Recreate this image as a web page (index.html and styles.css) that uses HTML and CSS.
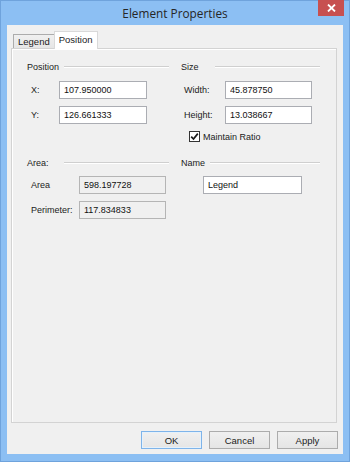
FILE: index.html
```html
<!DOCTYPE html>
<html lang="en">
<head>
    <meta charset="UTF-8">
    <meta name="viewport" content="width=device-width, initial-scale=1.0">
    <title>Element Properties</title>
    <link rel="stylesheet" href="styles.css">
</head>
<body>

    <div class="window">
        <!-- Title bar -->
        <div class="titlebar">
            <span></span>
            <span class="title">Element Properties</span>
            <button class="btn-close" type="button" aria-label="Close">
                <svg width="9" height="8" viewBox="0 0 9 8">
                    <path d="M1 0.5 L8 7.5 M8 0.5 L1 7.5" stroke="#fff" stroke-width="1.8" fill="none"/>
                </svg>
            </button>
        </div>

        <div class="client">
            <!-- Tabs -->
            <div class="tabs">
                <span class="tab">Legend</span>
                <span class="tab tab-active">Position</span>
            </div>

            <div class="panel">
                <div class="section">
                    <!-- Position group -->
                    <div class="group">
                        <div class="group-head head-position"><span>Position</span></div>
                        <div class="row row-pos">
                            <label for="pos-x">X:</label>
                            <input type="text" id="pos-x" value="107.950000">
                        </div>
                        <div class="row row-pos">
                            <label for="pos-y">Y:</label>
                            <input type="text" id="pos-y" value="126.661333">
                        </div>
                    </div>

                    <!-- Size group -->
                    <div class="group">
                        <div class="group-head head-size"><span>Size</span></div>
                        <div class="row row-size">
                            <label for="size-w">Width:</label>
                            <input type="text" id="size-w" value="45.878750">
                        </div>
                        <div class="row row-size">
                            <label for="size-h">Height:</label>
                            <input type="text" id="size-h" value="13.038667">
                        </div>
                        <div class="check-row">
                            <span class="check-box">
                                <svg width="9" height="9" viewBox="0 0 9 9">
                                    <path d="M1.2 4.6 L3.5 7 L7.8 1.6" stroke="#1a1a1a" stroke-width="1.7" fill="none"/>
                                </svg>
                            </span>
                            <span>Maintain Ratio</span>
                        </div>
                    </div>
                </div>

                <div class="section section-lower">
                    <!-- Area group -->
                    <div class="group">
                        <div class="group-head head-area"><span>Area:</span></div>
                        <div class="row row-area">
                            <span class="row-label">Area</span>
                            <span class="readout">598.197728</span>
                        </div>
                        <div class="row row-area">
                            <span class="row-label">Perimeter:</span>
                            <span class="readout">117.834833</span>
                        </div>
                    </div>

                    <!-- Name group -->
                    <div class="group">
                        <div class="group-head head-name"><span>Name</span></div>
                        <div class="row row-name">
                            <input type="text" value="Legend">
                        </div>
                    </div>
                </div>
            </div>

            <!-- Dialog buttons -->
            <div class="buttons">
                <button type="button" class="btn btn-default">OK</button>
                <button type="button" class="btn">Cancel</button>
                <button type="button" class="btn">Apply</button>
            </div>
        </div>
    </div>

</body>
</html>
```

FILE: styles.css
```css
:root {
    --frame: #8cbff3;
    --frame-edge: #6fa3dc;
    --face: #f0f0f0;
    --txt: #1b1b1b;
    --field-border: #abadb3;
    --etch-dark: #cfcfcf;
}

* {
    box-sizing: border-box;
}

body {
    margin: 0;
    font-family: 'Liberation Sans', Arial, sans-serif;
    font-size: 9px;
    color: var(--txt);
}

.window {
    width: 350px;
    height: 462px;
    background-color: var(--frame);
    border: 1px solid var(--frame-edge);
    display: flex;
    flex-direction: column;
}

/* Title bar */
.titlebar {
    height: 24px;
    display: grid;
    grid-template-columns: 1fr auto 1fr;
    align-items: start;
    padding-right: 5px;
}

.title {
    font-family: 'Open Sans', 'Liberation Sans', sans-serif;
    font-size: 11.8px;
    color: #262626;
    line-height: 24px;
    padding-left: 5px;
}

.btn-close {
    justify-self: end;
    width: 26px;
    height: 16px;
    margin-top: -1px;
    border: none;
    padding: 0;
    background-color: #c75050;
    display: flex;
    justify-content: center;
    align-items: center;
}

/* Client area */
.client {
    flex: 1;
    margin: 0 6px 7px;
    background-color: var(--face);
    display: flex;
    flex-direction: column;
}

.tabs {
    display: flex;
    align-items: flex-end;
    margin-top: 6px;
    padding-left: 6px;
    height: 18px;
    margin-bottom: -1px;
}

.tab {
    height: 15px;
    padding: 0 4px;
    font-size: 9.5px;
    line-height: 14px;
    border: 1px solid #acacac;
    border-bottom: none;
    background: linear-gradient(#f0f0f0, #e5e5e5);
}

.tab-active {
    position: relative;
    z-index: 1;
    height: 18px;
    padding: 0 4px;
    line-height: 16px;
    border-color: #d9d9d9;
    background: #fff;
    margin-left: -1px;
}

.panel {
    height: 375px;
    margin: 0 6px 0 4px;
    border: 1px solid #d3d3d3;
    box-shadow: inset 1px 1px 0 #fff;
    padding: 11px 0 0 15px;
}

.section {
    display: grid;
    grid-template-columns: 142px 139px;
    column-gap: 12px;
}

.section-lower {
    margin-top: 14px;
}

/* Group header with etched line */
.group-head {
    height: 14px;
    display: flex;
    align-items: center;
    margin-bottom: 7px;
}

.group-head span {
    flex-shrink: 0;
}

.group-head::after {
    content: '';
    flex: 1;
    border-top: 1px solid var(--etch-dark);
    border-bottom: 1px solid #fff;
}

.head-position span,
.head-area span {
    width: 37px;
}

.head-size span {
    width: 34px;
}

.head-name span {
    width: 29px;
}

.section-lower .group-head {
    margin-bottom: 6px;
}

/* Field rows */
.row {
    display: flex;
    align-items: center;
    height: 18px;
    margin-bottom: 7px;
}

.row label,
.row-label {
    flex-shrink: 0;
}

.row input,
.readout {
    height: 18px;
    padding: 0 4px;
    border: 1px solid var(--field-border);
    background-color: #fff;
    font-family: inherit;
    font-size: 9px;
    color: #111;
    line-height: 16px;
}

.row-pos {
    padding-left: 4px;
}

.row-pos label {
    width: 28px;
}

.row-pos input {
    width: 88px;
}

.row-size {
    padding-left: 3px;
}

.row-size label {
    width: 41px;
}

.row-size input {
    width: 87px;
}

.row-area {
    padding-left: 4px;
}

.row-area .row-label {
    width: 48px;
}

.readout {
    display: block;
    width: 87px;
    background-color: var(--face);
    border-color: #b5b5b5;
}

.row-name input {
    margin-left: 22px;
    width: 99px;
}

/* Checkbox */
.check-row {
    display: flex;
    align-items: center;
    gap: 3px;
    margin-top: 2px;
    padding-left: 8px;
    height: 11px;
}

.check-box {
    width: 11px;
    height: 11px;
    border: 1px solid #333;
    background-color: #fff;
    display: flex;
    justify-content: center;
    align-items: center;
}

/* Dialog buttons */
.buttons {
    display: flex;
    justify-content: flex-end;
    gap: 7px;
    margin-top: 8px;
    padding-right: 5px;
}

.btn {
    width: 61px;
    height: 18px;
    padding: 0;
    border: 1px solid #acacac;
    background: linear-gradient(#f0f0f0, #e5e5e5);
    font-family: inherit;
    font-size: 9.5px;
    color: var(--txt);
}

.btn-default {
    border-color: #7eb4ea;
    box-shadow: inset 0 0 0 1px #e5f1fb;
}
```
